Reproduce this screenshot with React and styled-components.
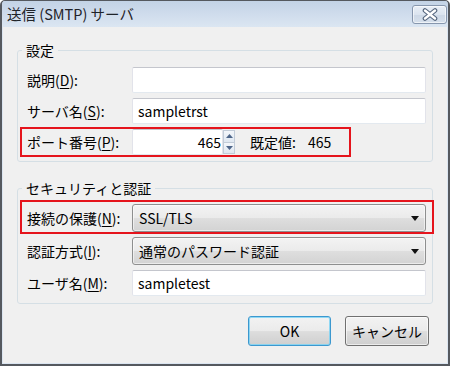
import React from 'react';
import styled, { createGlobalStyle } from 'styled-components';

const Global = createGlobalStyle`
  html, body { margin: 0; padding: 0; background: #ffffff; }
  body { font-family: "Noto Sans CJK JP", "Noto Sans", sans-serif; color: #000; }
  *, *::before, *::after { box-sizing: border-box; }
`;

const Window = styled.div`
  width: 450px;
  height: 366px;
  display: flex;
  flex-direction: column;
  background: #d9e4f1;
  border: 2px solid #55595f;
  border-top-width: 1px;
  border-radius: 5px 5px 0 0;
  overflow: hidden;
`;

const TitleBar = styled.div`
  height: 26px;
  flex: 0 0 26px;
  display: flex;
  align-items: flex-start;
  justify-content: space-between;
  padding: 0 1px 0 5px;
  background: linear-gradient(#c3d3e6 0%, #cfdcec 50%, #dbe6f2 100%);
`;

const Title = styled.div`
  font-size: 14.5px;
  line-height: 26px;
  color: #1f2329;
`;

const CloseButton = styled.div`
  margin-top: 4px;
  width: 35px;
  height: 19px;
  border: 1px solid #8797ae;
  border-radius: 3px;
  background: linear-gradient(#e9eff7 0%, #dbe4ef 50%, #cdd8e6 51%, #d6e0ec 100%);
  box-shadow: inset 0 0 0 1px rgba(255, 255, 255, 0.6);
  display: flex;
  align-items: center;
  justify-content: center;
`;

const Body = styled.div`
  flex: 1;
  display: flex;
  flex-direction: column;
  background: #f0f0f0;
  border: 1px solid #dbe5f1;
  border-top: none;
  padding: 0 14px;
`;

const Group = styled.fieldset`
  margin: ${p => p.$top}px 0 0 0;
  padding: ${p => p.$padTop}px 6px ${p => p.$padBottom}px 9px;
  border: 1px solid #d5dfe5;
  border-radius: 3px;
  min-width: 0;
`;

const Legend = styled.legend`
  margin-left: -5px;
  padding: 0 4px;
  font-size: 14px;
  line-height: 18px;
  color: #000;
`;

const Rows = styled.div`
  display: grid;
  grid-template-columns: 1fr;
  row-gap: 5px;
`;

const Row = styled.div`
  display: grid;
  grid-template-columns: 105px 1fr;
  align-items: center;
  height: ${p => p.$h || 26}px;
`;

const Highlight = styled.div`
  justify-self: ${p => (p.$fit ? 'start' : 'stretch')};
  border: 2px solid #e5141c;
  margin: ${p => p.$margin};
  padding: ${p => p.$padding};
`;

const Label = styled.label`
  font-size: 14px;
  line-height: 18px;
  color: #000;
  white-space: nowrap;
  u { text-decoration: underline; text-underline-offset: 2px; }
`;

const TextBox = styled.div`
  height: 26px;
  background: #ffffff;
  border: 1px solid #e2e3ea;
  border-top-color: #c4c6cd;
  border-bottom-color: #e3e9ef;
  border-radius: 2px;
  padding: 0 ${p => (p.$align === 'right' ? '1px' : '5px')} 0 5px;
  font-size: 14px;
  line-height: 24px;
  color: #000;
  text-align: ${p => p.$align || 'left'};
  width: ${p => (p.$w ? `${p.$w}px` : 'auto')};
`;

const PortLine = styled.div`
  display: flex;
  align-items: center;
`;

const Spinner = styled.div`
  width: 12px;
  height: 24px;
  display: flex;
  flex-direction: column;
`;

const SpinBtn = styled.div`
  flex: 1;
  border: 1px solid #c2ccd8;
  background: linear-gradient(#f4f7fb, #dfe7f1);
  display: flex;
  align-items: center;
  justify-content: center;
  & + & { border-top: none; }
`;

const Default = styled.span`
  margin-left: 15px;
  font-size: 14px;
  line-height: 18px;
  white-space: nowrap;
  span { margin-left: 12px; }
`;

const Select = styled.div`
  height: 28px;
  border: 1px solid #8e8f8f;
  border-radius: 3px;
  background: linear-gradient(#f3f3f3 0%, #ebebeb 48%, #dedede 52%, #d3d3d3 100%);
  box-shadow: inset 0 0 0 1px rgba(255, 255, 255, 0.55);
  display: flex;
  align-items: center;
  justify-content: space-between;
  padding: 0 6px 0 6px;
  font-size: 14px;
  line-height: 18px;
  color: #000;
`;

const ButtonBar = styled.div`
  display: flex;
  justify-content: flex-end;
  gap: 14px;
  margin-top: 12px;
  padding-right: 4px;
`;

const Button = styled.div`
  width: ${p => p.$w}px;
  height: 30px;
  border: 1px solid ${p => (p.$primary ? '#3c98cf' : '#707070')};
  border-radius: 3px;
  background: linear-gradient(#f2f2f2 0%, #ebebeb 48%, #dddddd 52%, #cfcfcf 100%);
  box-shadow: inset 0 0 0 1px ${p => (p.$primary ? 'rgba(120, 210, 245, 0.8)' : 'rgba(255,255,255,0.6)')};
  display: flex;
  align-items: center;
  justify-content: center;
  font-size: 14px;
  line-height: 18px;
  color: #000;
`;

const CloseIcon = () => (
  <svg width="16" height="13" viewBox="0 0 16 13">
    <path d="M3 2.5 L13 10.5 M13 2.5 L3 10.5" stroke="#56667e" strokeWidth="4.6" strokeLinecap="round" fill="none" />
    <path d="M3 2.5 L13 10.5 M13 2.5 L3 10.5" stroke="#ffffff" strokeWidth="2.4" strokeLinecap="round" fill="none" />
  </svg>
);

const Tri = ({ up }) => (
  <svg width="7" height="4" viewBox="0 0 7 4">
    <path d={up ? 'M0 4 L3.5 0 L7 4 Z' : 'M0 0 L7 0 L3.5 4 Z'} fill="#4d6589" />
  </svg>
);

const Arrow = () => (
  <svg width="8" height="5" viewBox="0 0 8 5">
    <path d="M0 0 L8 0 L4 5 Z" fill="#111" />
  </svg>
);

export default function App() {
  return (
    <>
      <Global />
      <Window>
        <TitleBar>
          <Title>送信 (SMTP) サーバ</Title>
          <CloseButton><CloseIcon /></CloseButton>
        </TitleBar>
        <Body>
          <Group $top={14} $padTop={8} $padBottom={6}>
            <Legend>設定</Legend>
            <Rows>
              <Row>
                <Label>説明(<u>D</u>):</Label>
                <TextBox />
              </Row>
              <Row>
                <Label>サーバ名(<u>S</u>):</Label>
                <TextBox>sampletrst</TextBox>
              </Row>
              <Highlight $fit $margin="-2px 0 -2px -7px" $padding="0 18px 0 5px">
                <Row>
                  <Label>ポート番号(<u>P</u>):</Label>
                  <PortLine>
                    <TextBox $w={91} $align="right">465</TextBox>
                    <Spinner>
                      <SpinBtn><Tri up /></SpinBtn>
                      <SpinBtn><Tri /></SpinBtn>
                    </Spinner>
                    <Default>既定値:<span>465</span></Default>
                  </PortLine>
                </Row>
              </Highlight>
            </Rows>
          </Group>

          <Group $top={17} $padTop={7} $padBottom={7}>
            <Legend>セキュリティと認証</Legend>
            <Rows>
              <Highlight $margin="-4px -8px -2px -7px" $padding="2px 6px 0 5px">
                <Row $h={28}>
                  <Label>接続の保護(<u>N</u>):</Label>
                  <Select>
                    <span>SSL/TLS</span>
                    <Arrow />
                  </Select>
                </Row>
              </Highlight>
              <Row $h={28}>
                <Label>認証方式(<u>I</u>):</Label>
                <Select>
                  <span>通常のパスワード認証</span>
                  <Arrow />
                </Select>
              </Row>
              <Row>
                <Label>ユーザ名(<u>M</u>):</Label>
                <TextBox>sampletest</TextBox>
              </Row>
            </Rows>
          </Group>

          <ButtonBar>
            <Button $w={83} $primary>OK</Button>
            <Button $w={84}>キャンセル</Button>
          </ButtonBar>
        </Body>
      </Window>
    </>
  );
}
